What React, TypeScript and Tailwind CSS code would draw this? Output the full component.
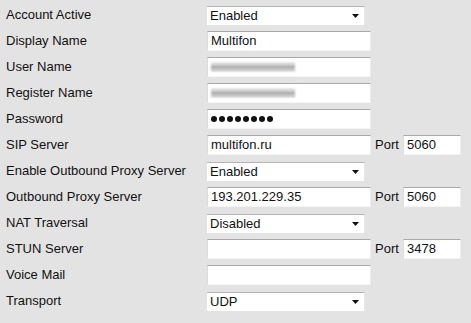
import { ReactNode } from "react";

// Champs du formulaire SIP
type Row = {
  label: string;
  kind: "select" | "input" | "blur" | "password";
  value?: string;
  port?: string;
};

const rows: Row[] = [
  { label: "Account Active", kind: "select", value: "Enabled" },
  { label: "Display Name", kind: "input", value: "Multifon" },
  { label: "User Name", kind: "blur" },
  { label: "Register Name", kind: "blur" },
  { label: "Password", kind: "password" },
  { label: "SIP Server", kind: "input", value: "multifon.ru", port: "5060" },
  { label: "Enable Outbound Proxy Server", kind: "select", value: "Enabled" },
  { label: "Outbound Proxy Server", kind: "input", value: "193.201.229.35", port: "5060" },
  { label: "NAT Traversal", kind: "select", value: "Disabled" },
  { label: "STUN Server", kind: "input", value: "", port: "3478" },
  { label: "Voice Mail", kind: "input", value: "" },
  { label: "Transport", kind: "select", value: "UDP" },
];

function Box({ w, h, children }: { w: string; h: string; children?: ReactNode }) {
  return (
    <div
      className={`${w} ${h} bg-white border-t border-t-[#a9a9a9] border-l border-l-[#dcdcdc] border-r border-r-[#ececec] border-b border-b-[#f4f4f4] flex items-center pl-[3px] overflow-hidden`}
    >
      {children}
    </div>
  );
}

function Field({ row }: { row: Row }) {
  if (row.kind === "select") {
    return (
      <div className="w-[158px] h-[19px] bg-white border-t border-t-[#b4b4b4] border-r border-r-[#e6e6e6] flex items-center pl-[3px] pr-[5px]">
        <span className="flex-1">{row.value}</span>
        <svg width="7" height="4" viewBox="0 0 7 4">
          <path d="M0 0 H7 L3.5 4 Z" fill="#111" />
        </svg>
      </div>
    );
  }
  if (row.kind === "blur") {
    return (
      <Box w="w-[164px]" h="h-[20px]">
        <div className="w-[84px] h-[9px] flex flex-col justify-center gap-[1px] blur-[0.8px]">
          <div className="h-[2px] bg-[#c4c4c4]" />
          <div className="h-[2px] bg-[#8a8a8a]" />
          <div className="h-[2px] bg-[#b0b0b0]" />
        </div>
      </Box>
    );
  }
  if (row.kind === "password") {
    return (
      <Box w="w-[164px]" h="h-[20px]">
        <div className="flex gap-[2px]">
          {Array.from({ length: 8 }).map((_, i) => (
            <div key={i} className="w-[6px] h-[6px] rounded-full bg-[#111]" />
          ))}
        </div>
      </Box>
    );
  }
  return <Box w="w-[164px]" h="h-[20px]">{row.value}</Box>;
}

export default function App() {
  return (
    <div
      className="w-[471px] h-[323px] bg-[#e3e3e3] pt-[2px] text-[13px] text-[#111]"
      style={{ fontFamily: '"Liberation Sans", Arial, sans-serif' }}
    >
      {rows.map((row) => (
        <div key={row.label} className="h-[26px] flex items-center">
          <div className="w-[207px] pl-[6px]">{row.label}</div>
          <Field row={row} />
          {row.port && (
            <div className="flex items-center">
              <span className="ml-[4px] w-[28px]">Port</span>
              <Box w="w-[58px]" h="h-[20px]">{row.port}</Box>
            </div>
          )}
        </div>
      ))}
    </div>
  );
}
